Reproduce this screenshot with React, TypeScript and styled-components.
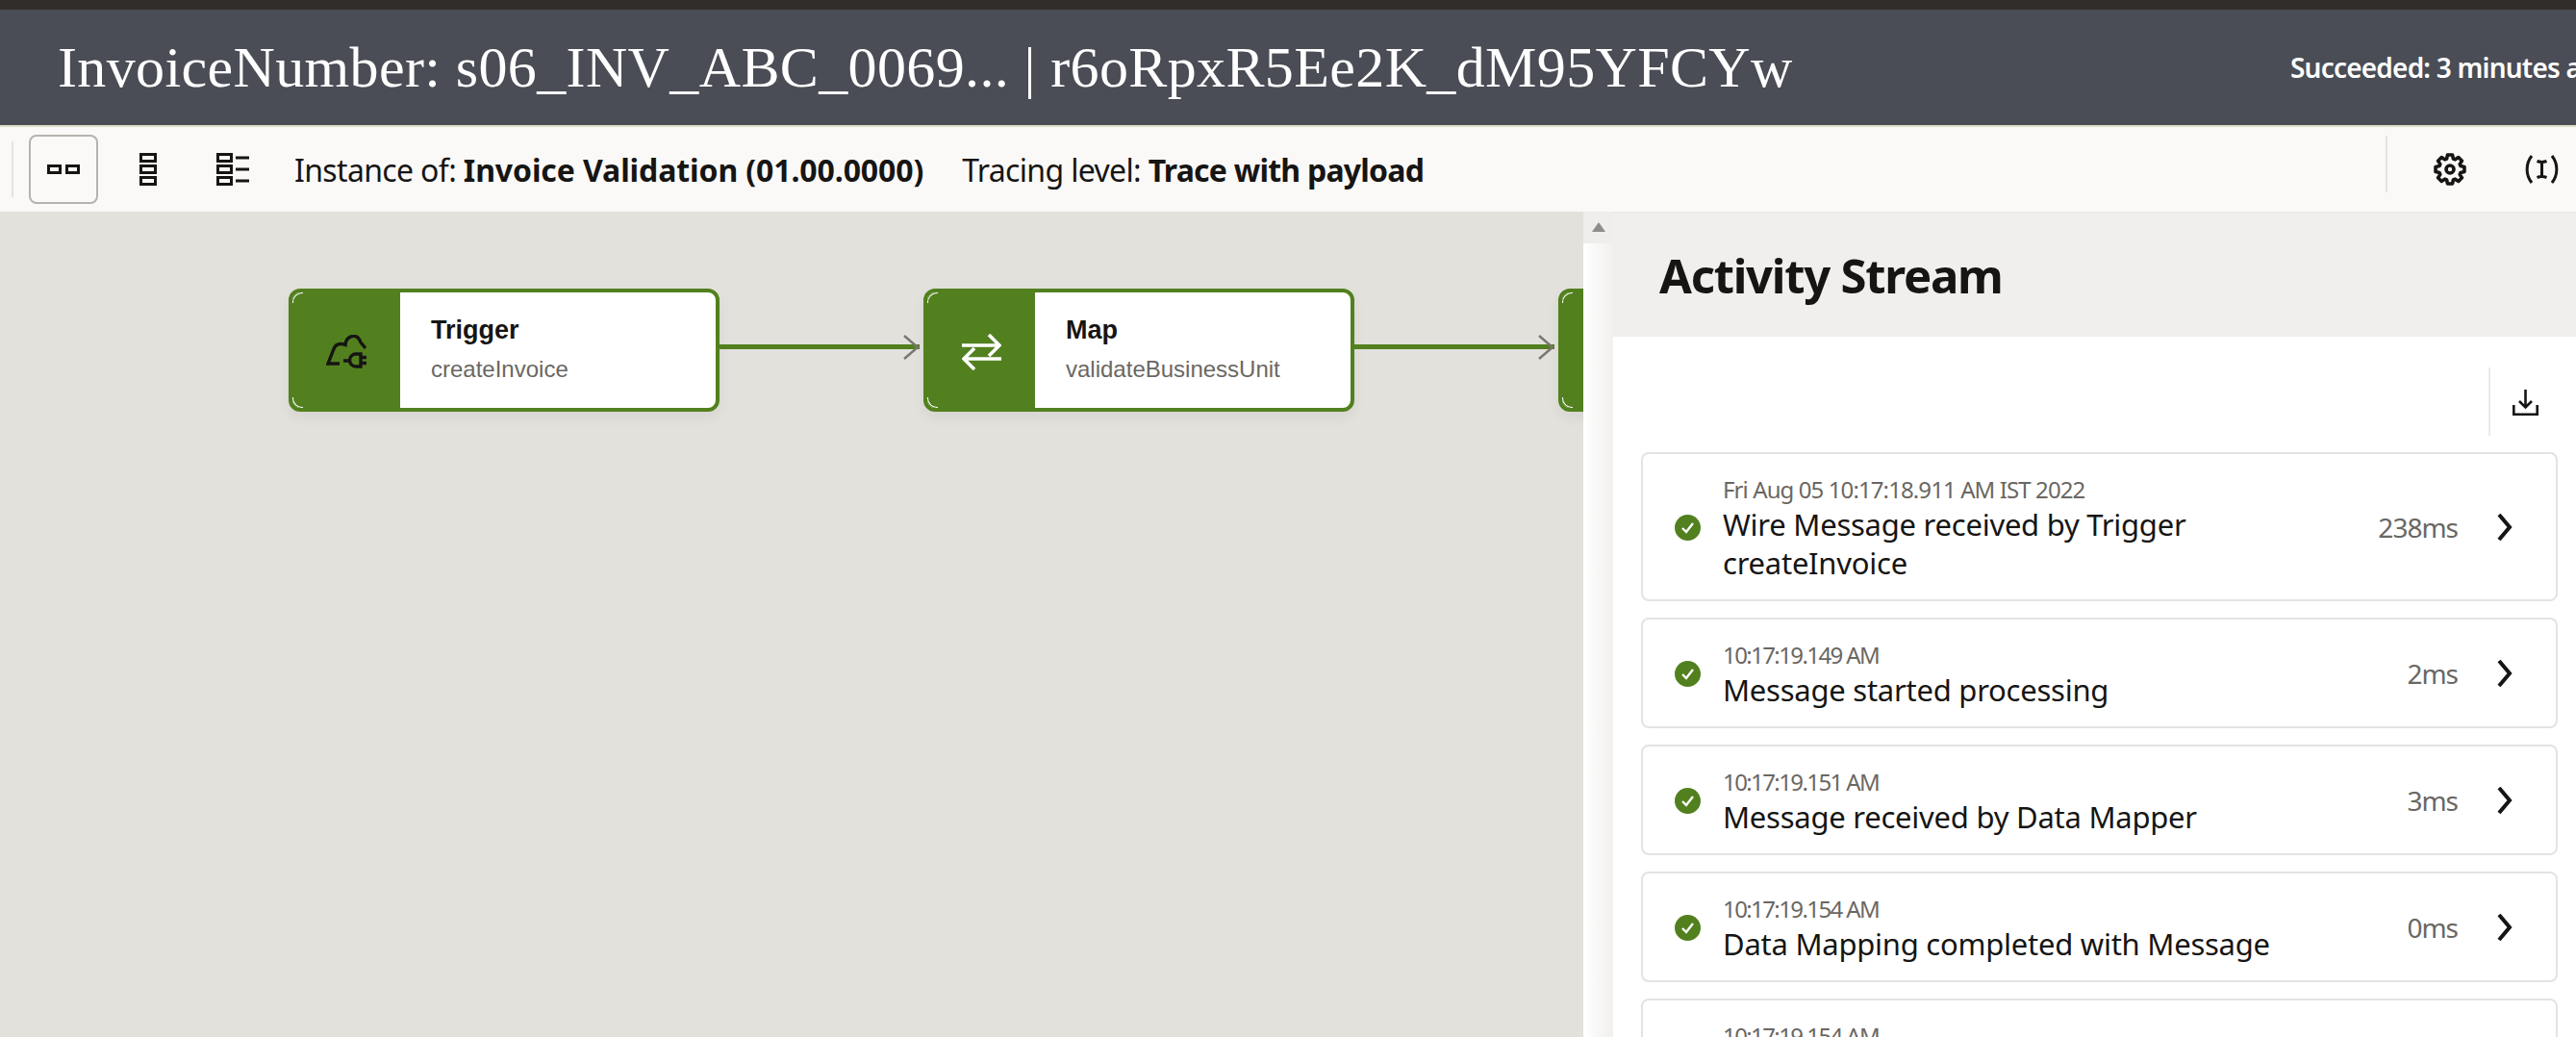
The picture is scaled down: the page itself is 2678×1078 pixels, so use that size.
import React from "react";
import styled, { createGlobalStyle } from "styled-components";

const GREEN = "#52801f";
const INK = "#161513";
const SANS = `"Noto Sans", "Open Sans", sans-serif`;

const GlobalStyle = createGlobalStyle`
  html, body {
    margin: 0;
    height: 100%;
    overflow: hidden;
    background: #ffffff;
  }
  * {
    box-sizing: border-box;
  }
`;

interface ActivityItem {
  time: string;
  lines?: string[];
  duration?: string;
}

const activities: ActivityItem[] = [
  {
    time: "Fri Aug 05 10:17:18.911 AM IST 2022",
    lines: ["Wire Message received by Trigger", "createInvoice"],
    duration: "238ms",
  },
  {
    time: "10:17:19.149 AM",
    lines: ["Message started processing"],
    duration: "2ms",
  },
  {
    time: "10:17:19.151 AM",
    lines: ["Message received by Data Mapper"],
    duration: "3ms",
  },
  {
    time: "10:17:19.154 AM",
    lines: ["Data Mapping completed with Message"],
    duration: "0ms",
  },
  { time: "10:17:19.154 AM" },
];

// eight toothed gear outline for the settings button
const gearPath = (() => {
  const points: string[] = [];
  for (let i = 0; i < 8; i++) {
    const a = (i * Math.PI) / 4;
    const at = (r: number, d: number) =>
      `${(17 + r * Math.sin(a + d)).toFixed(2)} ${(17 - r * Math.cos(a + d)).toFixed(2)}`;
    points.push(at(11.5, -0.3), at(15.2, -0.17), at(15.2, 0.17), at(11.5, 0.3));
  }
  return `M${points.join("L")}Z`;
})();

const TwoUpIcon = () => (
  <svg width="34" height="10" viewBox="0 0 34 10" fill="none" stroke={INK} strokeWidth="3">
    <rect x="1.5" y="1.5" width="12" height="7" />
    <rect x="20.5" y="1.5" width="12" height="7" />
  </svg>
);

const StackIcon = () => (
  <svg width="18" height="34" viewBox="0 0 18 34" fill="none" stroke={INK} strokeWidth="3">
    <rect x="1.5" y="1.5" width="15" height="7" />
    <rect x="1.5" y="13.5" width="15" height="7" />
    <rect x="1.5" y="25.5" width="15" height="7" />
  </svg>
);

const ListIcon = () => (
  <svg width="34" height="34" viewBox="0 0 34 34" fill="none" stroke={INK} strokeWidth="3">
    <rect x="1.5" y="1.5" width="14" height="7" />
    <rect x="1.5" y="13.5" width="14" height="7" />
    <rect x="1.5" y="25.5" width="14" height="7" />
    <path d="M20 5h14M20 17h14M20 29h14" />
  </svg>
);

const GearIcon = () => (
  <svg width="34" height="34" viewBox="0 0 34 34" fill="none" stroke={INK} strokeWidth="3.6" strokeLinejoin="round">
    <path d={gearPath} />
    <circle cx="17" cy="17" r="4" />
  </svg>
);

const VariableIcon = () => (
  <svg width="37" height="30" viewBox="0 0 37 30" fill="none" stroke={INK} strokeWidth="3">
    <path d="M8 1C1.5 9 1.5 21 8 29" />
    <path d="M29 1c6.5 8 6.5 20 0 28" />
    <path d="M13.5 6.5q5 1.8 10 0M18.5 7v16M13.5 23.5q5-1.8 10 0" />
  </svg>
);

const CloudPlugIcon = () => (
  <svg width="42" height="36" viewBox="0 0 42 36" fill="none" stroke={INK} strokeWidth="3.4">
    <path d="M14 30H2L7.5 16C9 10 14 8 20 10.5C21 1 32-3 36 8L41 14" />
    <path d="M18 27h7" />
    <path d="M36 20h-5a6.5 6.5 0 0 0 0 13h5z" />
    <path d="M36 23.5h6M36 29.5h6" />
  </svg>
);

const SwapIcon = () => (
  <svg width="41" height="38" viewBox="0 0 41 38" fill="none" stroke="#ffffff" strokeWidth="3.6">
    <path d="M0 12h39M28 1l11 11-11 11" />
    <path d="M41 26H2M13 15L2 26l11 11" />
  </svg>
);

const DownloadIcon = () => (
  <svg width="27" height="27" viewBox="0 0 27 27" fill="none" stroke={INK} strokeWidth="2.6">
    <path d="M13.5 0v18M7 12l6.5 6.5L20 12" />
    <path d="M1.3 16v9.7h24.4V16" />
  </svg>
);

const CheckBadge = () => (
  <svg width="27" height="27" viewBox="0 0 27 27" style={{ flexShrink: 0 }}>
    <circle cx="13.5" cy="13.5" r="13.5" fill={GREEN} />
    <path d="M8 14l4 4 7-9" fill="none" stroke="#ffffff" strokeWidth="2.4" />
  </svg>
);

const ChevronIcon = () => (
  <svg width="17" height="28" viewBox="0 0 17 28" fill="none" stroke={INK} strokeWidth="4">
    <path d="M3 1l11 13L3 27" />
  </svg>
);

const ArrowHead = () => (
  <svg width="18" height="26" viewBox="0 0 18 26" fill="none" stroke="#7a766f" strokeWidth="2.4">
    <path d="M2 1l14 12L2 25" />
  </svg>
);

const App = () => {
  return (
    <Page>
      <GlobalStyle />
      <TopStrip />
      <Header>
        <Title>InvoiceNumber: s06_INV_ABC_0069... | r6oRpxR5Ee2K_dM95YFCYw</Title>
        <Status>Succeeded: 3 minutes ago</Status>
      </Header>
      <Toolbar>
        <ToolbarSeparator />
        <ViewButton $active>
          <TwoUpIcon />
        </ViewButton>
        <ViewButton>
          <StackIcon />
        </ViewButton>
        <ViewButton>
          <ListIcon />
        </ViewButton>
        <Meta>
          Instance of: <strong>Invoice Validation (01.00.0000)</strong>
        </Meta>
        <Meta $last>
          Tracing level: <strong>Trace with payload</strong>
        </Meta>
        <ToolbarRightSeparator />
        <GearSlot>
          <GearIcon />
        </GearSlot>
        <VariableSlot>
          <VariableIcon />
        </VariableSlot>
      </Toolbar>
      <Body>
        <Canvas>
          <Node>
            <NodeIcon>
              <CloudPlugIcon />
            </NodeIcon>
            <NodeText>
              <NodeName>Trigger</NodeName>
              <NodeDetail>createInvoice</NodeDetail>
            </NodeText>
          </Node>
          <Connector>
            <ArrowHead />
          </Connector>
          <Node>
            <NodeIcon>
              <SwapIcon />
            </NodeIcon>
            <NodeText>
              <NodeName>Map</NodeName>
              <NodeDetail>validateBusinessUnit</NodeDetail>
            </NodeText>
          </Node>
          <Connector>
            <ArrowHead />
          </Connector>
          <Node>
            <NodeIcon />
          </Node>
        </Canvas>
        <ScrollStrip>
          <ScrollButton>
            <ScrollArrow />
          </ScrollButton>
        </ScrollStrip>
        <Panel>
          <PanelHeader>Activity Stream</PanelHeader>
          <PanelActions>
            <ActionSeparator />
            <DownloadIcon />
          </PanelActions>
          <CardList>
            {activities.map((item, index) => (
              <Card key={index}>
                <CheckBadge />
                <CardText>
                  <CardTime $long={item.time.length > 20}>{item.time}</CardTime>
                  {item.lines?.map((line) => <CardMessage key={line}>{line}</CardMessage>)}
                </CardText>
                {item.duration && (
                  <>
                    <Duration>{item.duration}</Duration>
                    <ChevronIcon />
                  </>
                )}
              </Card>
            ))}
          </CardList>
        </Panel>
      </Body>
    </Page>
  );
};

export default App;

const Page = styled.div`
  display: flex;
  flex-direction: column;
  width: 2678px;
  height: 1078px;
  overflow: hidden;
  font-family: ${SANS};
  color: ${INK};
`;

const TopStrip = styled.div`
  flex: 0 0 10px;
  background: #312d2a;
`;

const Header = styled.header`
  display: flex;
  align-items: center;
  flex: 0 0 122px;
  padding-left: 60px;
  overflow: hidden;
  background: #4a4d55;
  border-bottom: 2px solid #dcdcc8;
`;

const Title = styled.h1`
  flex: 0 0 2321px;
  margin: 0;
  font-family: "Liberation Serif", serif;
  font-size: 60px;
  font-weight: 400;
  letter-spacing: 0.37px;
  color: #ffffff;
  white-space: nowrap;
`;

const Status = styled.div`
  flex-shrink: 0;
  font-size: 28px;
  font-weight: 600;
  letter-spacing: -0.8px;
  color: #ffffff;
  white-space: nowrap;
`;

const Toolbar = styled.div`
  display: flex;
  align-items: center;
  flex: 0 0 88px;
  padding-left: 12px;
  background: #fbf9f8;
`;

const ToolbarSeparator = styled.div`
  width: 2px;
  height: 58px;
  margin-right: 16px;
  background: #e4e3df;
`;

const ViewButton = styled.div<{ $active?: boolean }>`
  display: flex;
  align-items: center;
  justify-content: center;
  width: 72px;
  height: 72px;
  margin-right: 16px;
  border: 2px solid ${(props) => (props.$active ? "#b5b3ad" : "transparent")};
  border-radius: 8px;
`;

const Meta = styled.div<{ $last?: boolean }>`
  margin-left: ${(props) => (props.$last ? "40px" : "12px")};
  ${(props) => props.$last && "flex: 1;"}
  font-size: 32px;
  letter-spacing: -0.65px;
  white-space: nowrap;

  strong {
    font-weight: 700;
    letter-spacing: ${(props) => (props.$last ? "-0.76px" : "-0.1px")};
  }
`;

const ToolbarRightSeparator = styled.div`
  width: 2px;
  height: 59px;
  margin-bottom: 12px;
  background: #e4e3df;
`;

const GearSlot = styled.div`
  display: flex;
  margin-left: 48px;
`;

const VariableSlot = styled.div`
  display: flex;
  margin: 0 17px 0 60px;
`;

const Body = styled.div`
  display: flex;
  flex: 1;
  min-height: 0;
`;

const Canvas = styled.div`
  display: flex;
  align-items: flex-start;
  flex: 0 0 1646px;
  padding: 80px 0 0 300px;
  overflow: hidden;
  background: #e2e1dc;
`;

const Node = styled.div`
  display: flex;
  flex: 0 0 448px;
  height: 128px;
  overflow: hidden;
  background: #ffffff;
  border: 4px solid ${GREEN};
  border-radius: 12px;
  box-shadow: 0 6px 14px rgba(0, 0, 0, 0.06);
`;

const NodeIcon = styled.div`
  position: relative;
  display: flex;
  align-items: center;
  justify-content: center;
  flex: 0 0 112px;
  padding-top: 4px;
  background: ${GREEN};

  &::before,
  &::after {
    content: "";
    position: absolute;
    left: 0;
    width: 10px;
    height: 10px;
    border-left: 1px solid #ffffff;
  }

  &::before {
    top: 0;
    border-top: 1px solid #ffffff;
    border-top-left-radius: 10px;
  }

  &::after {
    bottom: 0;
    border-bottom: 1px solid #ffffff;
    border-bottom-left-radius: 10px;
  }
`;

const NodeText = styled.div`
  display: flex;
  flex-direction: column;
  justify-content: center;
  padding: 0 0 4px 32px;
  font-family: "Liberation Sans", Arial, sans-serif;
`;

const NodeName = styled.div`
  font-size: 27px;
  font-weight: 700;
  line-height: 36px;
  margin-bottom: 8px;
`;

const NodeDetail = styled.div`
  font-size: 24px;
  line-height: 30px;
  color: #6a6763;
`;

const Connector = styled.div`
  display: flex;
  align-items: center;
  justify-content: flex-end;
  flex: 0 0 208px;
  height: 5px;
  margin: 58px 4px 0 0;
  background: ${GREEN};
`;

const ScrollStrip = styled.div`
  flex: 0 0 31px;
  background: linear-gradient(to right, #ffffff, #f1f0ee);
`;

const ScrollButton = styled.div`
  display: flex;
  justify-content: center;
  height: 33px;
  padding-top: 11px;
  background: #efeeec;
`;

const ScrollArrow = styled.div`
  width: 0;
  height: 0;
  border-left: 7px solid transparent;
  border-right: 7px solid transparent;
  border-bottom: 10px solid #8f8d89;
`;

const Panel = styled.section`
  flex: 1;
  min-width: 0;
  background: #ffffff;
  border-top: 2px solid #ebeae7;
`;

const PanelHeader = styled.h2`
  display: flex;
  align-items: center;
  height: 128px;
  margin: 0;
  padding-left: 48px;
  font-size: 49px;
  font-weight: 700;
  letter-spacing: -1.25px;
  background: #f0efed;
`;

const PanelActions = styled.div`
  display: flex;
  align-items: flex-start;
  justify-content: flex-end;
  height: 120px;
  padding: 32px 39px 0 0;

  svg {
    margin-top: 23px;
  }
`;

const ActionSeparator = styled.div`
  width: 2px;
  height: 71px;
  margin-right: 23px;
  background: #ebeae7;
`;

const CardList = styled.div`
  display: flex;
  flex-direction: column;
  gap: 17px;
  padding: 0 19px 0 29px;
`;

const Card = styled.article`
  display: flex;
  align-items: center;
  flex-shrink: 0;
  min-height: 115px;
  padding: 19px 45px 18px 33px;
  border: 2px solid #e4e3e0;
  border-radius: 8px;
`;

const CardText = styled.div`
  flex: 1;
  align-self: flex-start;
  margin: 2px 0 0 23px;
`;

const CardTime = styled.div<{ $long?: boolean }>`
  font-size: 24px;
  line-height: 32px;
  letter-spacing: ${(props) => (props.$long ? "-0.9px" : "-1.6px")};
  color: #6a6763;
`;

const CardMessage = styled.div`
  font-size: 31px;
  line-height: 40px;
  letter-spacing: -0.25px;
`;

const Duration = styled.div`
  margin: 0 40px 0 16px;
  font-size: 28px;
  letter-spacing: -1px;
  color: #6a6763;
`;
